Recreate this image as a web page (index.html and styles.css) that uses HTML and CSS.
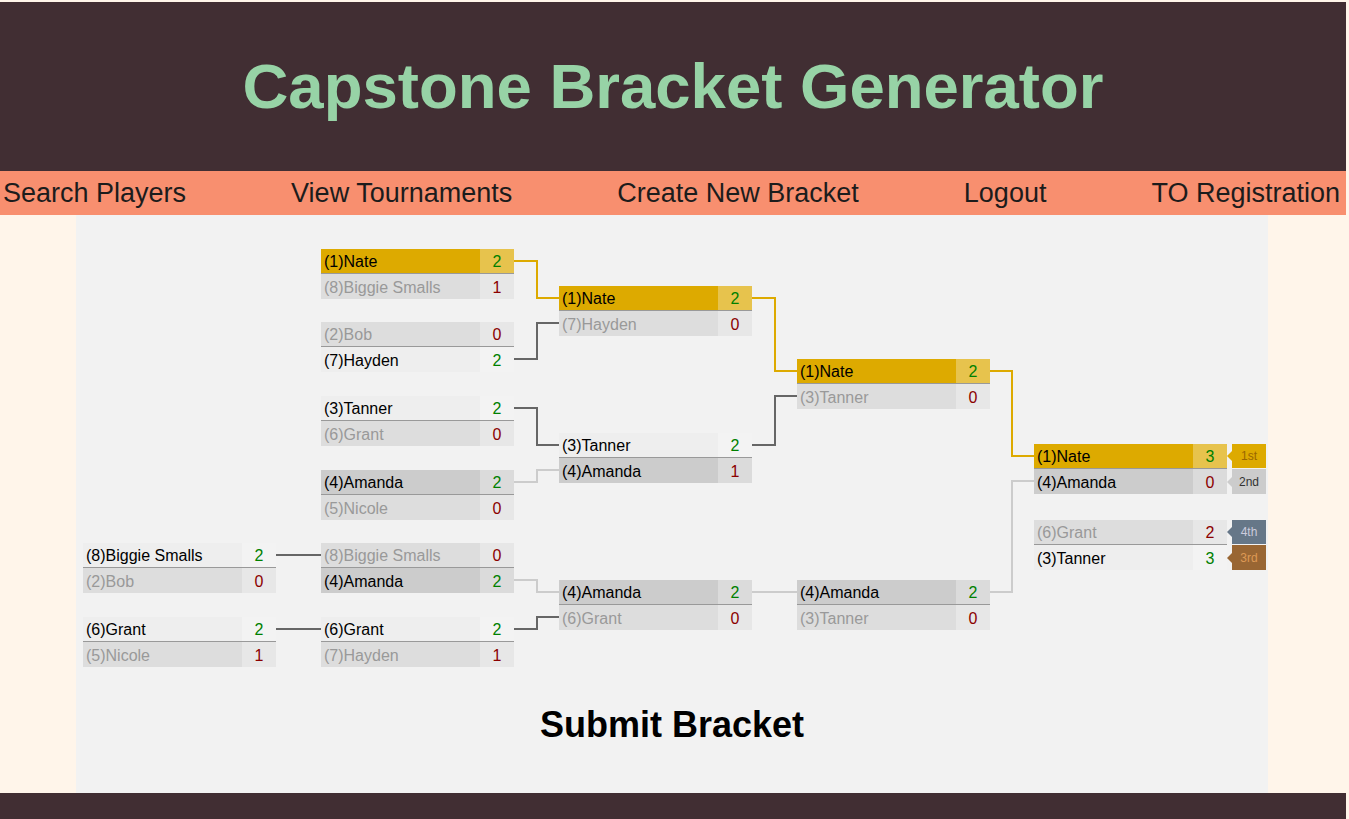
FILE: index.html
```html
<!DOCTYPE html>
<html lang="en">
<head>
<meta charset="utf-8">
<title>Capstone Bracket Generator</title>
<link rel="stylesheet" href="styles.css">
</head>
<body>
<div class="page">
  <header class="masthead">
    <h1 class="title">Capstone Bracket Generator</h1>
  </header>
  <nav class="nav">
    <a class="nav-link">Search Players</a>
    <a class="nav-link">View Tournaments</a>
    <a class="nav-link">Create New Bracket</a>
    <a class="nav-link">Logout</a>
    <a class="nav-link">TO Registration</a>
  </nav>
  <main class="main">
    <section class="panel">
      <div class="bracket">
        <svg class="connectors" width="1145" height="418" viewBox="0 0 1145 418">
          <g fill="none" stroke-width="2">
            <g stroke="#666666">
              <path d="M431 110 H454 V74 H476"/>
              <path d="M431 159 H454 V196 H476"/>
              <path d="M669 196 H692 V147 H714"/>
              <path d="M193 306 H238"/>
              <path d="M193 380 H238"/>
              <path d="M431 380 H454 V368 H476"/>
            </g>
            <g stroke="#cccccc">
              <path d="M431 233 H454 V221 H476"/>
              <path d="M431 331 H454 V343 H476"/>
              <path d="M669 343 H714"/>
              <path d="M907 343 H929 V232 H951"/>
            </g>
            <g stroke="#ddaa00">
              <path d="M431 12 H454 V49 H476"/>
              <path d="M669 49 H692 V122 H714"/>
              <path d="M907 122 H929 V207 H951"/>
            </g>
          </g>
        </svg>

        <div class="round">
          <div class="match lr-a">
            <div class="team win"><span class="label">(8)Biggie Smalls</span><span class="score">2</span></div>
            <div class="team lose"><span class="label">(2)Bob</span><span class="score">0</span></div>
          </div>
          <div class="match lr-b">
            <div class="team win"><span class="label">(6)Grant</span><span class="score">2</span></div>
            <div class="team lose"><span class="label">(5)Nicole</span><span class="score">1</span></div>
          </div>
        </div>

        <div class="round">
          <div class="match wr1-a">
            <div class="team win gold"><span class="label">(1)Nate</span><span class="score">2</span></div>
            <div class="team lose"><span class="label">(8)Biggie Smalls</span><span class="score">1</span></div>
          </div>
          <div class="match wr1-b">
            <div class="team lose"><span class="label">(2)Bob</span><span class="score">0</span></div>
            <div class="team win"><span class="label">(7)Hayden</span><span class="score">2</span></div>
          </div>
          <div class="match wr1-c">
            <div class="team win"><span class="label">(3)Tanner</span><span class="score">2</span></div>
            <div class="team lose"><span class="label">(6)Grant</span><span class="score">0</span></div>
          </div>
          <div class="match wr1-d">
            <div class="team win silver"><span class="label">(4)Amanda</span><span class="score">2</span></div>
            <div class="team lose"><span class="label">(5)Nicole</span><span class="score">0</span></div>
          </div>
          <div class="match lr-a">
            <div class="team lose"><span class="label">(8)Biggie Smalls</span><span class="score">0</span></div>
            <div class="team win silver"><span class="label">(4)Amanda</span><span class="score">2</span></div>
          </div>
          <div class="match lr-b">
            <div class="team win"><span class="label">(6)Grant</span><span class="score">2</span></div>
            <div class="team lose"><span class="label">(7)Hayden</span><span class="score">1</span></div>
          </div>
        </div>

        <div class="round">
          <div class="match wr2-a">
            <div class="team win gold"><span class="label">(1)Nate</span><span class="score">2</span></div>
            <div class="team lose"><span class="label">(7)Hayden</span><span class="score">0</span></div>
          </div>
          <div class="match wr2-b">
            <div class="team win"><span class="label">(3)Tanner</span><span class="score">2</span></div>
            <div class="team lose silver"><span class="label">(4)Amanda</span><span class="score">1</span></div>
          </div>
          <div class="match lr-c">
            <div class="team win silver"><span class="label">(4)Amanda</span><span class="score">2</span></div>
            <div class="team lose"><span class="label">(6)Grant</span><span class="score">0</span></div>
          </div>
        </div>

        <div class="round">
          <div class="match wr3">
            <div class="team win gold"><span class="label">(1)Nate</span><span class="score">2</span></div>
            <div class="team lose"><span class="label">(3)Tanner</span><span class="score">0</span></div>
          </div>
          <div class="match lr-c">
            <div class="team win silver"><span class="label">(4)Amanda</span><span class="score">2</span></div>
            <div class="team lose"><span class="label">(3)Tanner</span><span class="score">0</span></div>
          </div>
        </div>

        <div class="round round-final">
          <div class="match final">
            <div class="team win gold"><span class="label">(1)Nate</span><span class="score">3</span><span class="bubble first">1st</span></div>
            <div class="team lose silver"><span class="label">(4)Amanda</span><span class="score">0</span><span class="bubble second">2nd</span></div>
          </div>
          <div class="match consolation">
            <div class="team lose"><span class="label">(6)Grant</span><span class="score">2</span><span class="bubble fourth">4th</span></div>
            <div class="team win"><span class="label">(3)Tanner</span><span class="score">3</span><span class="bubble third">3rd</span></div>
          </div>
        </div>
      </div>
      <div class="actions">
        <button class="submit" type="button">Submit Bracket</button>
      </div>
    </section>
  </main>
  <footer class="footer"></footer>
</div>
</body>
</html>
```
FILE: styles.css
```css
* { box-sizing: border-box; }

html, body {
  margin: 0;
  padding: 0;
  background: #fff5ea;
  font-family: "Liberation Sans", Arial, sans-serif;
}

body {
  overflow: hidden;
}

.page {
  margin: 2px 3px 0 0;
}

.masthead {
  background: #412e33;
  height: 169px;
  display: flex;
  align-items: center;
  justify-content: center;
}

.title {
  margin: 0;
  color: #97d3a6;
  font-size: 63.5px;
  font-weight: bold;
  line-height: 1;
}

.nav {
  background: #f88f6f;
  height: 44px;
  display: flex;
  align-items: center;
  justify-content: space-between;
  padding: 0 6px 0 3px;
}

.nav-link {
  font-size: 27px;
  color: #1c1c1c;
  text-decoration: none;
  line-height: 1;
}

.main {
  background: #fff5ea;
}

.panel {
  width: 1192px;
  height: 578px;
  margin-left: 76px;
  background: #f2f2f2;
  padding-top: 34px;
}

.bracket {
  position: relative;
  height: 418px;
  margin-left: 7px;
  display: flex;
  gap: 45px;
}

.connectors {
  position: absolute;
  left: 0;
  top: 0;
  z-index: 0;
}

.round {
  position: relative;
  width: 193px;
  z-index: 1;
}

.round-final {
  margin-left: -1px;
}

.match {
  position: absolute;
  left: 0;
  width: 193px;
}

.wr1-a { top: 0; }
.wr1-b { top: 73px; }
.wr1-c { top: 147px; }
.wr1-d { top: 221px; }
.wr2-a { top: 37px; }
.wr2-b { top: 184px; }
.wr3 { top: 110px; }
.final { top: 195px; }
.consolation { top: 271px; }
.lr-a { top: 294px; }
.lr-b { top: 368px; }
.lr-c { top: 331px; }

.team {
  position: relative;
  display: flex;
  align-items: center;
  height: 25px;
  background: #eeeeee;
  color: #000;
  font-size: 16px;
}

.team:first-child {
  height: 25px;
  border-bottom: 1px solid #999999;
}

.label {
  width: 159px;
  height: 100%;
  display: flex;
  align-items: center;
  padding: 2px 0 0 3px;
  white-space: nowrap;
  overflow: hidden;
}

.score {
  width: 34px;
  height: 100%;
  display: flex;
  align-items: center;
  justify-content: center;
  padding-top: 2px;
  background: rgba(255, 255, 255, 0.3);
}

.win .score { color: #008000; }

.lose {
  background: #dddddd;
  color: #999999;
}

.lose .score { color: #8b0000; }

.team.gold {
  background: #ddaa00;
  color: #000;
}

.team.silver {
  background: #cccccc;
  color: #000;
}

.bubble {
  position: absolute;
  left: 198px;
  top: 0;
  bottom: 0;
  width: 34px;
  display: flex;
  align-items: center;
  justify-content: center;
  font-size: 12px;
}

.bubble::after {
  content: "";
  position: absolute;
  left: -5px;
  top: 50%;
  margin-top: -5px;
  border-top: 5px solid transparent;
  border-bottom: 5px solid transparent;
  border-right: 5px solid currentColor;
}

.bubble.first { background: #ddaa00; color: #996600; }
.bubble.first::after { border-right-color: #ddaa00; }
.bubble.second { background: #cccccc; color: #333333; }
.bubble.second::after { border-right-color: #cccccc; }
.bubble.third { background: #996633; color: #dd9955; }
.bubble.third::after { border-right-color: #996633; }
.bubble.fourth { background: #667788; color: #ccccdd; }
.bubble.fourth::after { border-right-color: #667788; }

.actions {
  display: flex;
  justify-content: center;
  margin-top: 37px;
}

.submit {
  border: 0;
  background: none;
  padding: 0;
  font-family: "Liberation Sans", Arial, sans-serif;
  font-size: 36px;
  font-weight: bold;
  color: #000;
  cursor: pointer;
}

.footer {
  background: #412e33;
  height: 60px;
}
```
